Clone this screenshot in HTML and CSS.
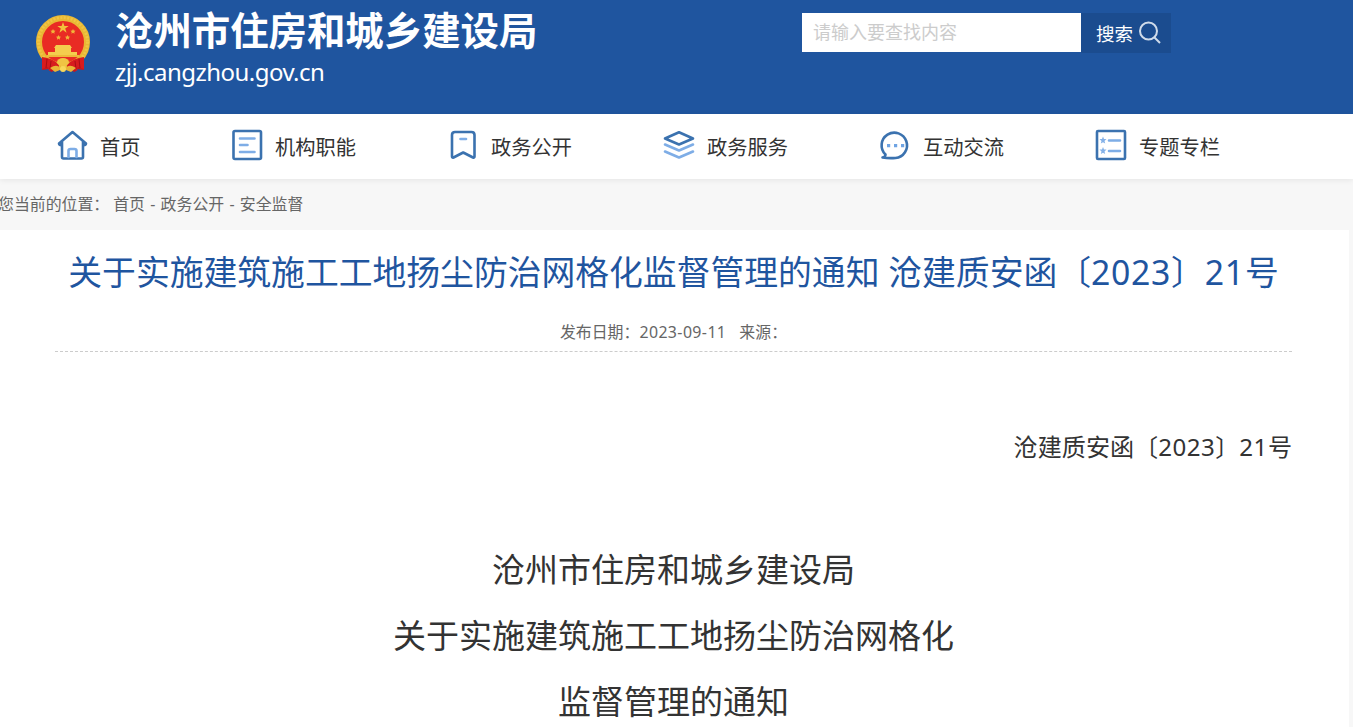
FILE: index.html
```html
<!DOCTYPE html>
<html lang="zh-CN">
<head>
    <meta charset="UTF-8">
    <title>沧州市住房和城乡建设局</title>
    <link rel="stylesheet" href="styles.css">
</head>
<body>
    <header class="header">
        <svg class="emblem" width="56" height="60" viewBox="0 0 56 60">
            <path d="M9 41L7 56l7-1 2 3 12-4 12 4 2-3 7 1-2-15z" fill="#c9151b"/>
            <circle cx="28" cy="28" r="24" fill="#e92b24" stroke="#e9b734" stroke-width="6"/>
            <circle cx="28" cy="28" r="24.500" fill="none" stroke="#efc544" stroke-width="3" stroke-dasharray="2 1.5"/>
            <path d="M28 8l1.400 4h4.300l-3.500 2.500 1.400 4.200-3.600-2.600-3.600 2.600 1.400-4.200-3.500-2.500h4.300z" fill="#f2c33c"/>
            <g fill="#f2b53a">
                <path d="M18 15l.8 1.500 1.700.2-1.200 1.200.3 1.800-1.600-.9-1.600.9.3-1.800-1.200-1.200 1.700-.2z"/>
                <path d="M38 15l.8 1.500 1.700.2-1.200 1.200.3 1.800-1.600-.9-1.600.9.3-1.800-1.200-1.200 1.700-.2z"/>
                <path d="M23.500 21l.8 1.500 1.700.2-1.200 1.200.3 1.800-1.600-.9-1.600.9.3-1.800-1.200-1.200 1.700-.2z"/>
                <path d="M32.500 21l.8 1.500 1.700.2-1.200 1.200.3 1.800-1.600-.9-1.600.9.3-1.800-1.200-1.200 1.700-.2z"/>
            </g>
            <path d="M21 31h14l2 3H19zM20 34h16v4h6v3H13v-3h7z" fill="#f4cd4d"/>
            <path d="M12 41h32v2H11z" fill="#edb83a"/>
            <path d="M7 43q11 1 17 8l-1 6-4-3-5 3-1-4-6 2zM49 43q-11 1-17 8l1 6 4-3 5 3 1-4 6 2z" fill="#d71b1e"/>
            <path d="M12 45l-1 9M16 47l-1 8M44 45l1 9M40 47l1 8" stroke="#a80e14"/>
            <ellipse cx="28" cy="48" rx="6" ry="4" fill="#f0c443"/>
            <path d="M15 54q6-4 9-1h8q3-3 9 1l-5 4-5-2h-6l-5 2z" fill="#e9b536"/>
            <circle cx="28" cy="55" r="3" fill="#f8d85a"/>
        </svg>
        <div class="site">
            <div class="site-name">沧州市住房和城乡建设局</div>
            <div class="site-url">zjj.cangzhou.gov.cn</div>
        </div>
        <form class="search">
            <input class="search-input" type="text" placeholder="请输入要查找内容">
            <button class="search-btn" type="button">搜索
                <svg width="24" height="24" viewBox="0 0 24 24" fill="none" stroke="#cfdbea" stroke-width="2">
                    <circle cx="10.500" cy="10" r="8.500"/>
                    <path d="M16.500 16.500l5.500 5.500"/>
                </svg>
            </button>
        </form>
    </header>

    <nav class="nav">
        <a class="nav-item nav-home">
            <svg class="icon" viewBox="0 0 32 32">
                <path class="dark" d="M2 14.500L15.500 3 29 14.500M5 12.500V28q0 1.500 1.500 1.500h18q1.500 0 1.500-1.500V12.500M2 14.500q0 2 3 1.500M29 14.500q0 2-3 1.500"/>
                <path class="light" d="M11.500 28v-6q0-2 2-2h4q2 0 2 2v6"/>
            </svg>
            首页
        </a>
        <a class="nav-item">
            <svg class="icon" viewBox="0 0 32 32">
                <rect class="dark" x="2.500" y="2" width="27.500" height="28" rx="1.500"/>
                <path class="light" d="M9 9.500h14.500M9 16h7.500M9 23h14.500"/>
            </svg>
            机构职能
        </a>
        <a class="nav-item">
            <svg class="icon" viewBox="0 0 32 32">
                <path class="dark" d="M5 6q0-3 3-3h16.500q3 0 3 3v21.500q0 1.500-1.500 1L16.200 23.500 6.500 28.500Q5 29 5 27.500z"/>
                <path class="light" d="M13.500 10h5.500"/>
            </svg>
            政务公开
        </a>
        <a class="nav-item">
            <svg class="icon" viewBox="0 0 32 32">
                <path class="dark" d="M2 9.500L16 3.200l14 6.300-14 6z"/>
                <path class="light" d="M2 15.500l14 6 14-6M2 22.500l14 6 14-6"/>
            </svg>
            政务服务
        </a>
        <a class="nav-item">
            <svg class="icon" viewBox="0 0 32 32">
                <path class="dark" d="M3.500 28.500q3-.5 3-3A12.700 12.700 0 1 1 16.500 29q-7 .5-13-.500z"/>
                <path d="M8 15h3.200v3.200H8zM15 15h3.200v3.200H15zM22 15h3.200v3.200H22z" fill="#6fa4e3"/>
            </svg>
            互动交流
        </a>
        <a class="nav-item">
            <svg class="icon" viewBox="0 0 32 32">
                <rect class="dark" x="2" y="2" width="28" height="28" rx="1"/>
                <path class="light" d="M14 11.500h11M14 22h11"/>
                <path d="M8 7.500l1 2.500h2.500l-2 2 .7 2.500L8 13.200l-2.200 1.300.7-2.500-2-2H7zM8 18l1 2.500h2.500l-2 2 .7 2.500L8 23.700 5.800 25l.7-2.500-2-2H7z" fill="#84b1e8"/>
            </svg>
            专题专栏
        </a>
    </nav>

    <div class="crumb">
        <span class="crumb-label">您当前的位置：</span>首页 - 政务公开 - 安全监督
    </div>

    <main class="article">
        <h1 class="title">关于实施建筑施工工地扬尘防治网格化监督管理的通知 沧建质安函〔<span class="num">2023</span>〕<span class="num">21</span>号</h1>
        <div class="meta"><span>发布日期：<span class="num">2023-09-11</span></span><span>来源：</span></div>
        <p class="doc-no">沧建质安函〔<span class="num">2023</span>〕<span class="num">21</span>号</p>
        <div class="doc-title">
            <p>沧州市住房和城乡建设局</p>
            <p>关于实施建筑施工工地扬尘防治网格化</p>
            <p>监督管理的通知</p>
        </div>
    </main>
</body>
</html>
```
FILE: styles.css
```css
* {
    box-sizing: border-box;
}
body {
    margin: 0;
    height: 727px;
    overflow: hidden;
    background: #f7f7f7;
    color: #333;
    font-family: "Microsoft YaHei", "Noto Sans", "Noto Sans CJK SC", sans-serif;
}
p, h1 {
    margin: 0;
}
.num {
    letter-spacing: 0.02em;
}

/* 头部 */
.header {
    display: flex;
    align-items: flex-start;
    height: 114px;
    padding-left: 35px;
    background: #1f559f;
    color: #fff;
}
.emblem {
    margin-top: 14px;
}
.site {
    width: 711px;
    padding: 3px 0 0 24px;
    white-space: nowrap;
}
.site-name {
    font-size: 38.4px;
    font-weight: bold;
    line-height: 54px;
}
.site-url {
    font-size: 24px;
    line-height: 30px;
    letter-spacing: -0.53px;
}
.search {
    display: flex;
    margin-top: 13px;
}
.search-input {
    width: 279px;
    height: 39px;
    padding: 0 11px 2px;
    border: none;
    border-radius: 0;
    font-family: inherit;
    font-size: 18px;
}
.search-input::placeholder {
    color: #ccc;
}
.search-btn {
    display: flex;
    align-items: center;
    gap: 5px;
    width: 90px;
    height: 40px;
    padding: 0 0 1px 15px;
    border: none;
    background: #1b4c8f;
    color: #fff;
    font-family: inherit;
    font-size: 18.5px;
}

/* 导航 */
.nav {
    display: flex;
    height: 65px;
    padding-left: 57px;
    background: #fff;
    box-shadow: 0 1px 6px rgba(0, 0, 0, 0.08);
}
.nav-item {
    display: flex;
    align-items: center;
    gap: 12px;
    width: 216px;
    font-size: 20.25px;
    white-space: nowrap;
}
.nav-home {
    gap: 11px;
    width: 174px;
}
.icon {
    width: 32px;
    height: 32px;
    margin-top: -3px;
    fill: none;
    stroke-linecap: round;
    stroke-linejoin: round;
}
.dark {
    stroke: #3b72af;
    stroke-width: 2.6;
}
.light {
    stroke: #7eade6;
    stroke-width: 2.6;
}

/* 当前位置 */
.crumb {
    height: 51px;
    margin-left: -2px;
    color: #666;
    font-size: 15.9px;
    line-height: 51px;
    word-spacing: 1.1px;
}
.crumb-label {
    margin-right: 4px;
}

/* 正文 */
.article {
    height: 497px;
    margin-right: 4px;
    padding: 15px 57px 0 55px;
    background: #fff;
}
.title {
    color: #1f559f;
    font-size: 33.8px;
    font-weight: normal;
    line-height: 54px;
    text-align: center;
    white-space: nowrap;
}
.meta {
    display: flex;
    justify-content: center;
    gap: 13px;
    height: 53px;
    padding-top: 21px;
    border-bottom: 1px dashed #ccc;
    color: #666;
    font-size: 15.9px;
    line-height: 24px;
}
.meta .num {
    letter-spacing: 0.4px;
}
.doc-no {
    margin-top: 74px;
    font-size: 24.1px;
    line-height: 42px;
    text-align: right;
}
.doc-title {
    margin-top: 69px;
    font-size: 33px;
    line-height: 66px;
    text-align: center;
}
```
